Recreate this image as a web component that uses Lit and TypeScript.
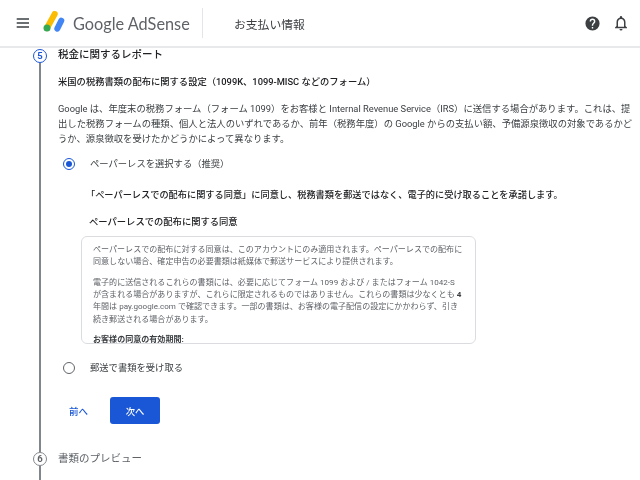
import { LitElement, html, css } from "lit";
import { customElement } from "lit/decorators.js";

@customElement("app-root")
export class AppRoot extends LitElement {
  static styles = css`
    :host { display: block; width: 640px; height: 480px; overflow: hidden; background: #fff; font-family: Roboto, "Noto Sans CJK JP", sans-serif; color: #3c4043; }
    .page { width: 640px; height: 480px; display: flex; flex-direction: column; overflow: hidden; filter: blur(0.45px); }
    header { flex: none; height: 46px; border-bottom: 2px solid #e8e9ea; display: flex; align-items: center; box-sizing: content-box; }
    .menu { margin-left: 16px; width: 14px; height: 14px; display: block; }
    .logo { margin-left: 12px; width: 24px; height: 24px; display: block; }
    .brand { margin-left: 7px; font-size: 16.3px; color: #5f6368; font-family: Lato, sans-serif; white-space: nowrap; width: 113px; }
    .divider { margin-left: 16px; width: 1px; height: 30px; background: #e4e5e6; }
    .title { margin-left: 31px; font-size: 11.8px; color: #3c4043; flex: 1; }
    .help { width: 17px; height: 17px; display: block; margin-right: 11.500px; }
    .bell { width: 18px; height: 18px; display: block; margin-right: 10px; }
    main { flex: 1; min-height: 0; display: flex; flex-direction: column; }
    .step { display: flex; }
    .step.five { height: 404px; }
    .step.six { flex: 1; }
    .rail { width: 58px; flex: none; display: flex; flex-direction: column; align-items: center; padding-left: 22px; box-sizing: border-box; }
    .num { flex: none; width: 14px; height: 14px; box-sizing: border-box; border: 1.5px solid #1a57d6; color: #1a57d6; border-radius: 50%; font-size: 9.5px; font-weight: 700; display: flex; align-items: center; justify-content: center; line-height: 1; }
    .six .num { border-color: #80868b; color: #5f6368; }
    .line { flex: 1; width: 2px; background: #80868b; }
    .five .rail { padding-top: 1px; }
    .body { flex: 1; min-width: 0; }
    h2 { margin: 0; font-size: 10.5px; font-weight: 500; line-height: 14px; color: #202124; }
    .six h2 { font-weight: 400; color: #5f6368; }
    h3 { margin: 13px 0 0; font-size: 9.3px; font-weight: 500; line-height: 14px; color: #202124; }
    .desc { margin: 12px 0 0; font-size: 9.33px; line-height: 15px; color: #3c4043; width: 578px; }
    .opt { display: flex; align-items: center; font-size: 9.3px; color: #3c4043; margin-left: 5px; }
    .radio { width: 12px; height: 12px; box-sizing: border-box; border-radius: 50%; border: 1.5px solid #5f6368; flex: none; display: flex; align-items: center; justify-content: center; margin: 2px 15px 0 0; }
    .radio.on { border-color: #1a57d6; }
    .radio.on::after { content: ""; width: 6px; height: 6px; background: #1a57d6; border-radius: 50%; }
    .opt.first { margin-top: 8px; height: 18px; }
    .opt.second { margin-top: 14px; height: 18px; }
    .inner { margin-left: 30px; }
    .agree { margin: 16px 0 0 -2px; font-size: 9.2px; font-weight: 500; line-height: 14px; color: #202124; }
    .agree-h { margin: 13px 0 0 1px; font-size: 9.3px; font-weight: 500; line-height: 14px; color: #202124; }
    .box { margin: 7px 0 0 -7px; width: 395px; height: 108px; box-sizing: border-box; border: 1px solid #dadce0; border-radius: 6px; padding: 7px 12.300px 0 11px; overflow: hidden; font-size: 8.05px; line-height: 12.2px; color: #5f6368; }
    .box p { margin: 0 0 8.500px; }
    .box b { color: #3c4043; font-weight: 700; }
    .actions { display: flex; align-items: center; margin: 21px 0 0 11px; }
    .prev { font-size: 9.5px; color: #1a57d6; font-weight: 500; width: 41px; }
    .next { width: 50px; height: 27px; background: #1a57d6; border-radius: 3px; color: #fff; font-size: 9.3px; font-weight: 500; display: flex; align-items: center; justify-content: center; }
  `;

  render() {
    return html`<div class="page">
      <header>
        <svg class="menu" viewBox="0 0 14 14"><path d="M.7 2.200h12.300v1.600H.7zM.7 6.200h12.300v1.600H.7zM.7 10.200h12.300v1.600H.7z" fill="#3c4043"/></svg>
        <svg class="logo" viewBox="0 0 24 24">
          <path d="M5 17 L12.700 3" stroke="#fbbc04" stroke-width="6" stroke-linecap="round" fill="none"/>
          <path d="M15.300 17.700 L19.300 9.700" stroke="#4285f4" stroke-width="6" stroke-linecap="round" fill="none"/>
          <circle cx="5" cy="17" r="3.500" fill="#34a853"/>
        </svg>
        <span class="brand">Google AdSense</span>
        <span class="divider"></span>
        <span class="title">お支払い情報</span>
        <svg class="help" viewBox="0 0 24 24"><path fill="#3c4043" d="M12 2a10 10 0 1 0 0 20 10 10 0 0 0 0-20zm1 17h-2v-2h2v2zm2.100-7.700-.9.9c-.7.7-1.200 1.300-1.200 2.800h-2v-.5c0-1.100.5-2.100 1.200-2.800l1.200-1.300c.4-.3.6-.8.6-1.400a2 2 0 0 0-4 0H8a4 4 0 0 1 8 0c0 .9-.4 1.700-.9 2.300z"/></svg>
        <svg class="bell" viewBox="0 0 24 24"><path fill="#3c4043" d="M12 22a2 2 0 0 0 2-2h-4a2 2 0 0 0 2 2zm6-6v-5c0-3.100-1.600-5.600-4.500-6.300V4a1.500 1.500 0 0 0-3 0v.7C7.600 5.400 6 7.900 6 11v5l-2 2v1h16v-1l-2-2zm-2 1H8v-6c0-2.500 1.500-4.500 4-4.500s4 2 4 4.500v6z"/></svg>
      </header>
      <main>
        <section class="step five">
          <div class="rail"><span class="num">5</span><span class="line"></span></div>
          <div class="body">
            <h2>税金に関するレポート</h2>
            <h3>米国の税務書類の配布に関する設定（1099K、1099-MISC などのフォーム）</h3>
            <p class="desc">Google は、年度末の税務フォーム（フォーム 1099）をお客様と Internal Revenue Service（IRS）に送信する場合があります。これは、提出した税務フォームの種類、個人と法人のいずれであるか、前年（税務年度）の Google からの支払い額、予備源泉徴収の対象であるかどうか、源泉徴収を受けたかどうかによって異なります。</p>
            <div class="opt first"><span class="radio on"></span>ペーパーレスを選択する（推奨）</div>
            <div class="inner">
              <p class="agree">「ペーパーレスでの配布に関する同意」に同意し、税務書類を郵送ではなく、電子的に受け取ることを承諾します。</p>
              <p class="agree-h">ペーパーレスでの配布に関する同意</p>
              <div class="box">
                <p>ペーパーレスでの配布に対する同意は、このアカウントにのみ適用されます。ペーパーレスでの配布に同意しない場合、確定申告の必要書類は紙媒体で郵送サービスにより提供されます。</p>
                <p>電子的に送信されるこれらの書類には、必要に応じてフォーム 1099 および / またはフォーム 1042-S が含まれる場合がありますが、これらに限定されるものではありません。これらの書類は少なくとも <b>4</b> 年間は pay.google.com で確認できます。一部の書類は、お客様の電子配信の設定にかかわらず、引き続き郵送される場合があります。</p>
                <p><b>お客様の同意の有効期間:</b></p>
              </div>
            </div>
            <div class="opt second"><span class="radio"></span>郵送で書類を受け取る</div>
            <div class="actions"><span class="prev">前へ</span><span class="next">次へ</span></div>
          </div>
        </section>
        <section class="step six">
          <div class="rail"><span class="num">6</span><span class="line"></span></div>
          <div class="body"><h2>書類のプレビュー</h2></div>
        </section>
      </main>
    </div>`;
  }
}
